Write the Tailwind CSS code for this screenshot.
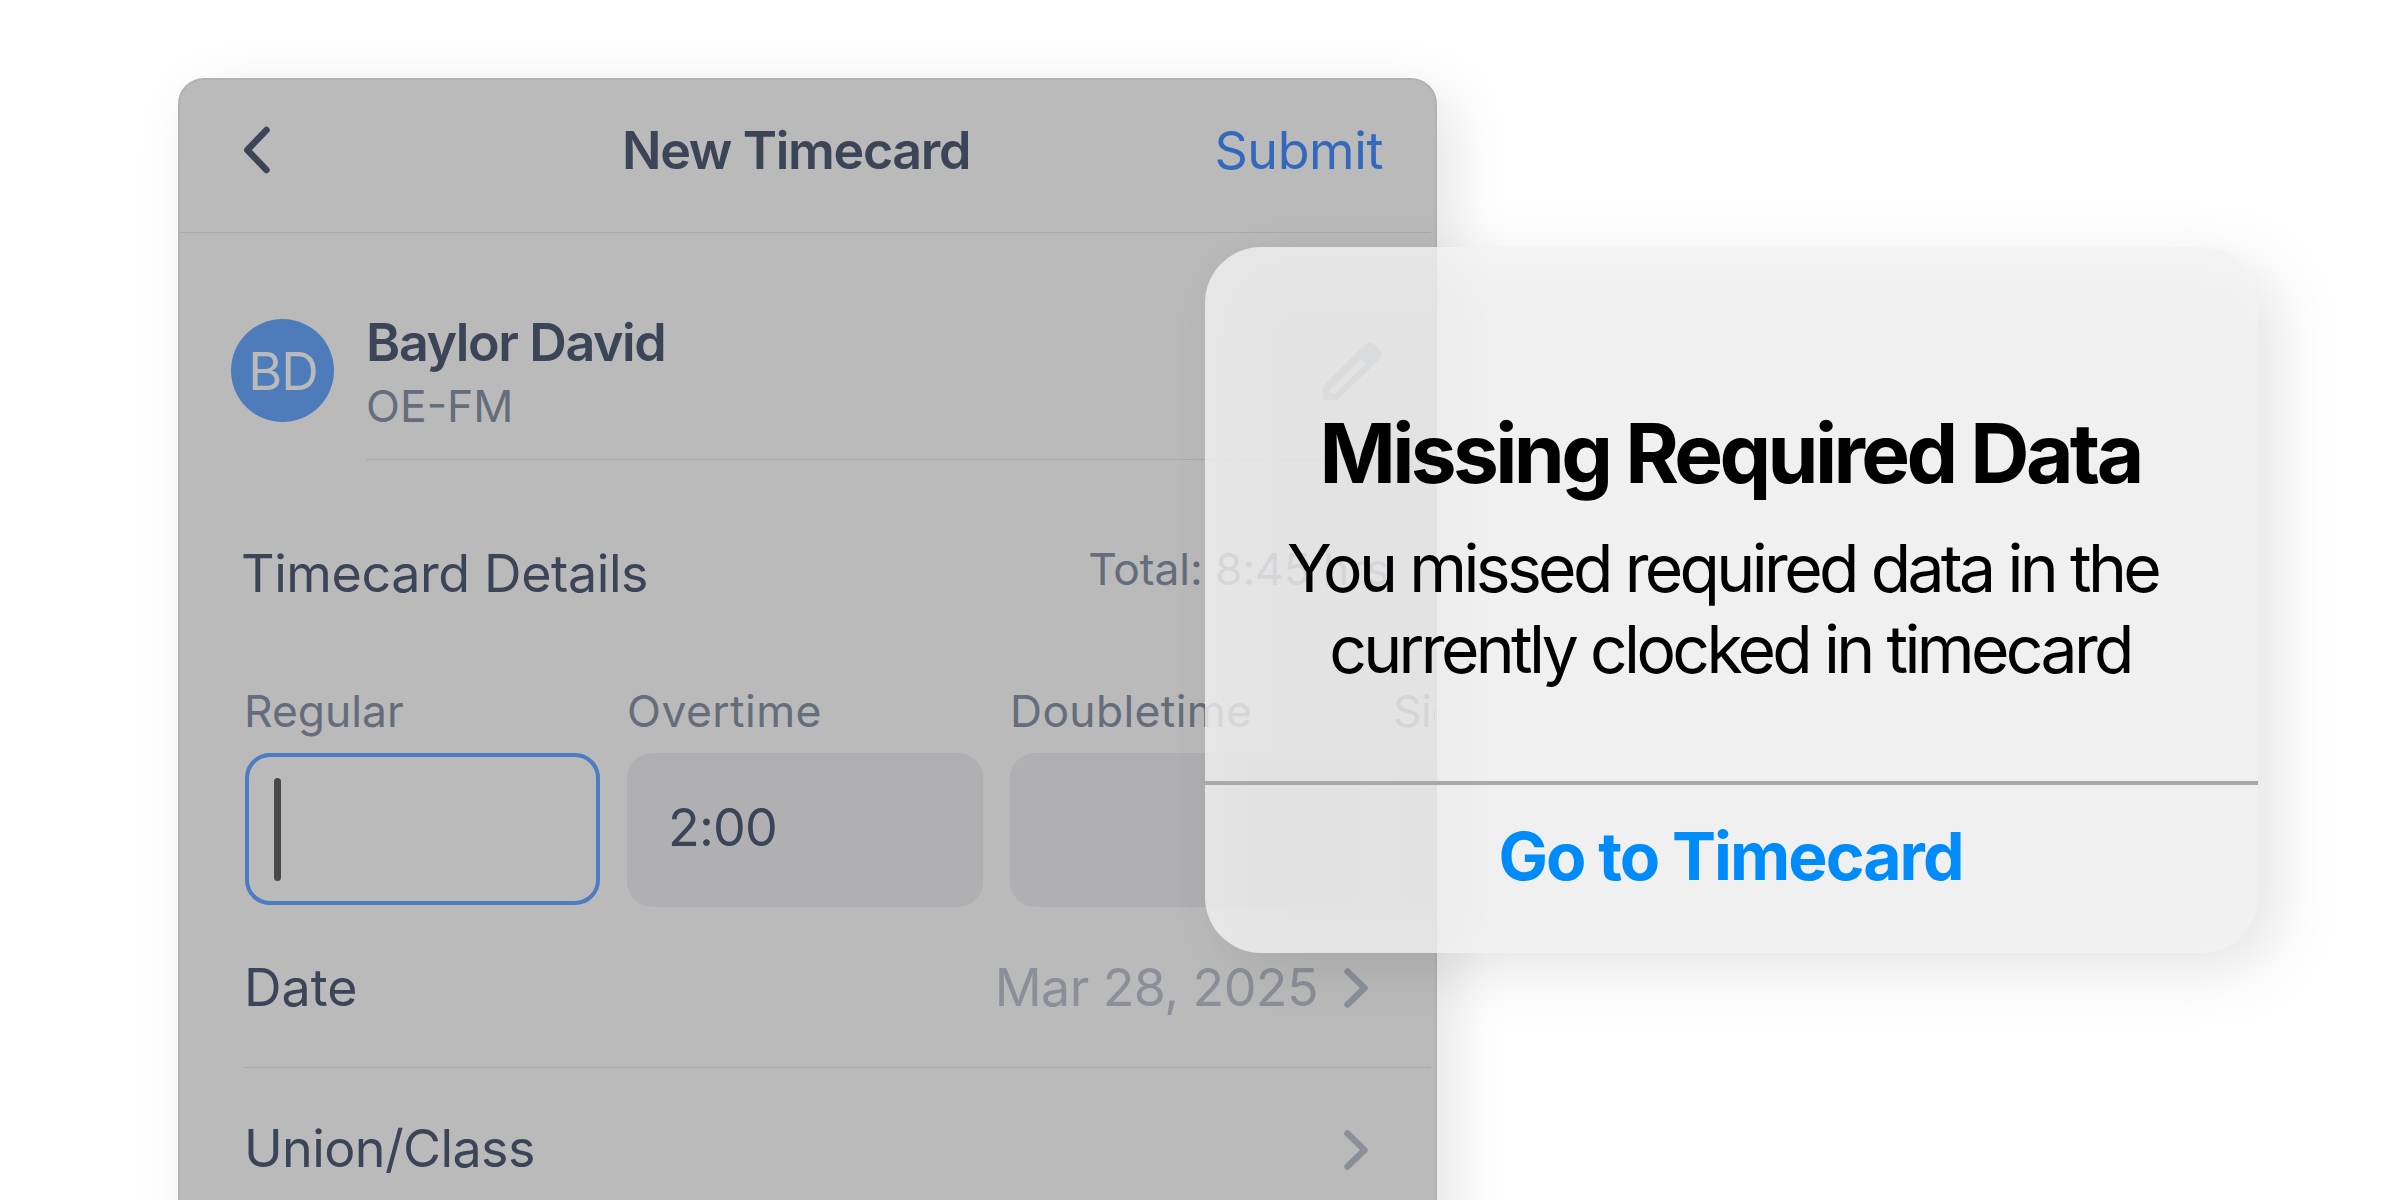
<!DOCTYPE html>
<html lang="en">
<head>
    <meta charset="UTF-8">
    <meta name="viewport" content="width=device-width, initial-scale=1.0">
    <title>New Timecard</title>
    <script src="https://cdn.jsdelivr.net/npm/@tailwindcss/browser@4"></script>
</head>
<body class="bg-white font-['Inter',sans-serif]">
    <main class="relative h-[1200px] w-[2400px] overflow-hidden pt-[78px] pl-[178px]">
        <!-- Timecard screen -->
        <div class="h-[1200px] w-[1259px] overflow-hidden rounded-t-[26px] border-2 border-[#b2b2b2] bg-[#bababa] text-[52px] text-[#3b4557] shadow-[16px_16px_60px_rgba(0,0,0,0.11)]">
            <!-- Header -->
            <header class="mr-[4px] flex h-[153px] items-center border-b border-[#aaaaac] pr-[48px] pb-[10px] pl-[60px]">
                <svg class="-mt-[3px] h-[50px] w-[34px]" viewBox="0 0 34 50" fill="none" stroke="currentColor" stroke-width="6.5" stroke-linecap="round" stroke-linejoin="round">
                    <path d="M26.5 5 L7.3 25 L26.5 45"/>
                </svg>
                <h1 class="ml-[348px] font-semibold tracking-[-1.35px]">New Timecard</h1>
                <span class="ml-auto tracking-[-0.42px] text-[#3368bd]">Submit</span>
            </header>

            <!-- Employee -->
            <section class="flex pl-[51px]">
                <div class="mt-[86px] flex size-[103px] items-center justify-center rounded-full bg-[#4e7cbb] pt-[2px] pl-px tracking-[-1px] text-[#bababa]">BD</div>
                <div class="mr-[4px] ml-[32px] flex h-[227px] flex-1 border-b border-[#aaaaac] pt-[78px]">
                    <div>
                        <div class="leading-[64px] font-semibold tracking-[-1.4px]">Baylor David</div>
                        <div class="text-[44.4px] leading-[62px] text-[#666d7a]">OE-FM</div>
                    </div>
                    <svg class="mt-[31px] mr-[49px] ml-auto h-[59px] w-[60px]" viewBox="0 0 60 59" fill="#888c94">
                        <path fill-rule="evenodd" d="M1 46 Q1 44 2.5 42.5 L42 3 Q48 -2 53 3 L57 7 Q62 12 57 18 L17 56.5 Q15.500 58 13.500 58 H4 Q1 58 1 55 Z M39 17 L8 47.500 V51.500 H13 L44 21.500 Z"/>
                    </svg>
                </div>
            </section>

            <!-- Hours -->
            <section>
                <div class="flex h-[226px] items-center pt-[2px] pl-[61px]">
                    <h2 class="tracking-[-0.4px]">Timecard Details</h2>
                    <span class="-mt-[9px] ml-auto mr-[46px] text-[44.4px] tracking-[-0.1px] text-[#666d7a]">Total: 8:45 hrs</span>
                </div>
                <div class="flex gap-[27px] pl-[65px]">
                    <div class="w-[355px] shrink-0">
                        <div class="h-[67px] text-[44.4px] leading-[50px] text-[#666d7a] -indent-[1px]">Regular</div>
                        <div class="h-[152px] rounded-[25px] border-4 border-[#4c7cc1] pt-[21px] pl-[25px]">
                            <div class="h-[103px] w-[7px] rounded-full bg-[#484848]"></div>
                        </div>
                    </div>
                    <div class="w-[356px] shrink-0">
                        <div class="h-[67px] text-[44.4px] leading-[50px] tracking-[0.45px] text-[#666d7a]">Overtime</div>
                        <div class="flex h-[154px] items-center rounded-[25px] bg-[#b0b0b2] pb-[4px] pl-[41px] tracking-[-0.8px]">2:00</div>
                    </div>
                    <div class="w-[356px] shrink-0">
                        <div class="h-[67px] text-[44.4px] leading-[50px] tracking-[0.35px] text-[#666d7a]">Doubletime</div>
                        <div class="h-[154px] rounded-[25px] bg-[#b0b0b2]"></div>
                    </div>
                    <div class="w-[356px] shrink-0">
                        <div class="h-[67px] text-[44.4px] leading-[50px] tracking-[-0.5px] text-[#666d7a]">Sick</div>
                        <div class="h-[154px] rounded-[25px] bg-[#b0b0b2]"></div>
                    </div>
                </div>
            </section>

            <!-- Rows -->
            <div class="mr-[4px] ml-[64px] flex h-[161px] items-center border-b border-[#aaaaac] pt-[2px] pr-[59px]">
                <span>Date</span>
                <span class="ml-auto tracking-[-0.6px] text-[#8b9098]">Mar 28, 2025</span>
                <svg class="ml-[22px] h-[46px] w-[32px] text-[#8b9098]" viewBox="0 0 32 46" fill="none" stroke="currentColor" stroke-width="6.5" stroke-linecap="round" stroke-linejoin="round">
                    <path d="M7.500 6.500 L24.500 23 L7.500 39.500"/>
                </svg>
            </div>
            <div class="mr-[4px] ml-[64px] flex h-[161px] items-center pr-[59px]">
                <span class="tracking-[-0.59px]">Union/Class</span>
                <svg class="mt-[3px] ml-auto h-[46px] w-[32px] text-[#8b9098]" viewBox="0 0 32 46" fill="none" stroke="currentColor" stroke-width="6.5" stroke-linecap="round" stroke-linejoin="round">
                    <path d="M7.500 6.500 L24.500 23 L7.500 39.500"/>
                </svg>
            </div>
        </div>

        <!-- Alert: the shadow is its own layer so that it shows through the translucent panel -->
        <div class="absolute top-[263px] left-[1225px] h-[706px] w-[1053px] rounded-[56px] bg-black/10 blur-[30px]"></div>
        <div class="absolute top-[247px] left-[1205px] flex h-[706px] w-[1053px] flex-col rounded-[56px] bg-[#f2f2f2]/80 text-center text-[66px] text-black">
            <div class="h-[534px] pt-[157px] pr-[3px]">
                <h2 class="text-[82px] leading-[100px] font-bold tracking-[-3.65px]">Missing Required Data</h2>
                <p class="mt-[24px] leading-[81px] tracking-[-3.65px]">You missed required data in the&nbsp;<br>currently clocked in timecard</p>
            </div>
            <div class="h-[4px] bg-[#a9a9a9]"></div>
            <button class="h-[141px] pt-px pr-[2px] font-bold tracking-[-1.95px] text-[#008bfb]">Go to Timecard</button>
        </div>
    </main>
</body>
</html>
